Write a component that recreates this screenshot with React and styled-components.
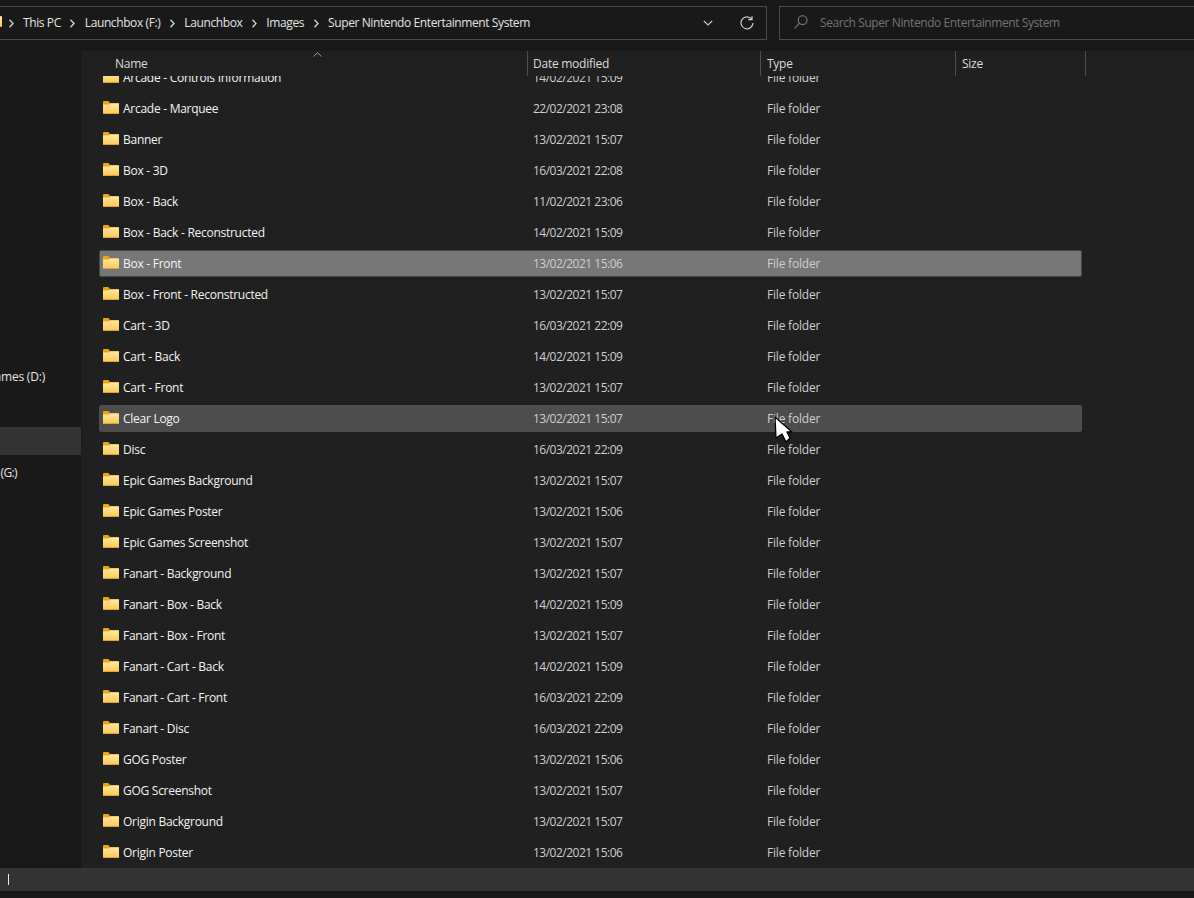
import React from "react";
import styled, { createGlobalStyle } from "styled-components";

const Global = createGlobalStyle`
  html, body { margin: 0; padding: 0; background: #191919; overflow: hidden; }
  #root { width: 1194px; height: 898px; }
`;

const Shell = styled.div`
  position: relative; width: 1194px; height: 898px; display: flex; flex-direction: column;
  background: #191919; color: #fff; overflow: hidden;
  font-family: "Open Sans", "Noto Sans", sans-serif; font-size: 12px;
`;
const TopBar = styled.div`
  height: 51px; flex: none; display: flex; align-items: flex-start; padding-top: 6px; box-sizing: border-box; gap: 12px;
`;
const AddressBox = styled.div`
  width: 767px; height: 34px; box-sizing: border-box; flex: none; display: flex; align-items: center;
  border: 1px solid #4c4c4c; border-left: none; overflow: hidden;
`;
const Crumbs = styled.div`
  flex: 1; display: flex; align-items: center; margin-left: -14px; height: 100%; padding-bottom: 2px; box-sizing: border-box;
`;
const Crumb = styled.span`
  color: #e4e4e4; letter-spacing: -0.4px; white-space: nowrap;
`;
const Sep = styled.svg`
  width: 7px; height: 9px; margin: 2px 8.5px 0 ${p => (p.$first ? 5.5 : 8.5)}px; flex: none;
  fill: none; stroke: #d8d8d8; stroke-width: 1.3;
`;
const AddrTool = styled.svg`
  flex: none; fill: none; stroke: ${p => p.$color || "#d0d0d0"}; 
`;
const SearchBox = styled.div`
  flex: 1; height: 34px; box-sizing: border-box; margin-right: -2px; display: flex; align-items: center; gap: 12px;
  padding: 0 0 2px 14px; border: 1px solid #4c4c4c; color: #737373; letter-spacing: -0.41px; white-space: nowrap;
`;
const Body = styled.div`
  flex: 1; min-height: 0; display: flex;
`;
const Sidebar = styled.div`
  width: 82px; flex: none; padding-top: 310px; box-sizing: border-box; border-right: 1px solid #1d1d1d;
  overflow: hidden;
`;
const NavRow = styled.div`
  height: ${p => (p.$selected ? 28 : 32)}px; margin: ${p => (p.$selected ? "2px 0 2px 0" : 0)};
  display: flex; align-items: center; justify-content: flex-end; overflow: hidden; white-space: nowrap;
  background: ${p => (p.$selected ? "#333333" : "transparent")};
  padding-right: ${p => p.$pad || 0}px; color: #e6e6e6; padding-bottom: 1px; box-sizing: border-box;
  letter-spacing: ${p => p.$spacing || 0}px;
`;
const Main = styled.div`
  flex: 1; min-width: 0; background: #202020; display: flex; flex-direction: column;
`;
const Header = styled.div`
  height: 25px; flex: none; display: flex; position: relative; z-index: 1; background: #202020;
`;
const HeadCell = styled.div`
  position: relative; width: ${p => p.$w}px; padding-left: ${p => p.$pad}px; box-sizing: border-box;
  border-right: 1px solid #4f4f4f; line-height: 26px; color: #dcdcdc; letter-spacing: -0.25px;
`;
const Caret = styled.svg`
  position: absolute; left: 231px; top: 1px; width: 9px; height: 5px;
  fill: none; stroke: #9a9a9a; stroke-width: 1;
`;
const List = styled.div`
  flex: 1; min-height: 0; overflow: hidden;
`;
const Rows = styled.div`
  margin: -12px 0 0 17px; display: flex; flex-direction: column; gap: 4px;
`;
const Row = styled.div`
  width: 983px; height: 27px; box-sizing: border-box; display: grid; grid-template-columns: 433px 234px 1fr;
  align-items: center; border: 1px solid ${p => (p.$state === "selected" ? "#454545" : p.$state === "hover" ? "#4d4d4d" : "transparent")};
  border-radius: 2px;
  background: ${p => (p.$state === "selected" ? "#777777" : p.$state === "hover" ? "#4d4d4d" : "transparent")};
`;
const NameCell = styled.div`
  display: flex; align-items: center; gap: 4px; padding-left: 3px; color: #f4f4f4; white-space: nowrap; letter-spacing: -0.27px;
`;
const DateCell = styled.div`color: #cfcfcf; letter-spacing: -0.5px;`;
const TypeCell = styled.div`color: #cfcfcf; letter-spacing: -0.2px;`;
const Status = styled.div`
  height: 23px; flex: none; background: #333333; display: flex; align-items: center; padding-left: 8px;
`;
const Caret2 = styled.div`width: 1px; height: 11px; background: #e8e8e8;`;
const Foot = styled.div`height: 7px; flex: none; background: #191919;`;
const Pointer = styled.svg`
  position: absolute; left: 770px; top: 414px; width: 24px; height: 30px;
`;

const Folder = () => (
  <svg width="16" height="13" viewBox="0 0 16 13" style={{ flex: "none", marginTop: -3 }}>
    <defs>
      <linearGradient id="ff" x1="0" y1="0" x2="0" y2="1">
        <stop offset="0" stopColor="#ffe9a3" />
        <stop offset="1" stopColor="#fbc94f" />
      </linearGradient>
    </defs>
    <path d="M0 1.2C0 .5.5 0 1.2 0h4l2 2H16v3H0z" fill="#eaa60f" />
    <path d="M0 3.6h6l1.6-1.2H15c.6 0 1 .4 1 1V12c0 .6-.4 1-1 1H1c-.6 0-1-.4-1-1z" fill="url(#ff)" />
    <path d="M0 12h16c0 .6-.4 1-1 1H1c-.6 0-1-.4-1-1z" fill="#e0a52e" />
  </svg>
);

const data = [
  ["Arcade - Controls Information", "14/02/2021 15:09"],
  ["Arcade - Marquee", "22/02/2021 23:08"],
  ["Banner", "13/02/2021 15:07"],
  ["Box - 3D", "16/03/2021 22:08"],
  ["Box - Back", "11/02/2021 23:06"],
  ["Box - Back - Reconstructed", "14/02/2021 15:09"],
  ["Box - Front", "13/02/2021 15:06", "selected"],
  ["Box - Front - Reconstructed", "13/02/2021 15:07"],
  ["Cart - 3D", "16/03/2021 22:09"],
  ["Cart - Back", "14/02/2021 15:09"],
  ["Cart - Front", "13/02/2021 15:07"],
  ["Clear Logo", "13/02/2021 15:07", "hover"],
  ["Disc", "16/03/2021 22:09"],
  ["Epic Games Background", "13/02/2021 15:07"],
  ["Epic Games Poster", "13/02/2021 15:06"],
  ["Epic Games Screenshot", "13/02/2021 15:07"],
  ["Fanart - Background", "13/02/2021 15:07"],
  ["Fanart - Box - Back", "14/02/2021 15:09"],
  ["Fanart - Box - Front", "13/02/2021 15:07"],
  ["Fanart - Cart - Back", "14/02/2021 15:09"],
  ["Fanart - Cart - Front", "16/03/2021 22:09"],
  ["Fanart - Disc", "16/03/2021 22:09"],
  ["GOG Poster", "13/02/2021 15:06"],
  ["GOG Screenshot", "13/02/2021 15:07"],
  ["Origin Background", "13/02/2021 15:07"],
  ["Origin Poster", "13/02/2021 15:06"],
];

const Chevron = ({ first }) => (
  <Sep $first={first} viewBox="0 0 7 9"><path d="M1.5 .8 5 4.5 1.5 8.2" /></Sep>
);

export default function App() {
  return (
    <Shell>
      <Global />
      <TopBar>
        <AddressBox>
          <Crumbs>
            <Folder />
            <Chevron first />
            <Crumb>This PC</Crumb>
            <Chevron />
            <Crumb>Launchbox (F:)</Crumb>
            <Chevron />
            <Crumb>Launchbox</Crumb>
            <Chevron />
            <Crumb>Images</Crumb>
            <Chevron />
            <Crumb>Super Nintendo Entertainment System</Crumb>
          </Crumbs>
          <AddrTool width="10" height="6" viewBox="0 0 10 6" strokeWidth="1.2" style={{ marginRight: 27 }}>
            <path d="M.8.8 5 5 9.2.8" />
          </AddrTool>
          <AddrTool width="14" height="14" viewBox="0 0 14 14" strokeWidth="1.2" style={{ marginRight: 12 }}>
            <path d="M11.8 3.2A6 6 0 1 0 13 7" />
            <path d="M8.2 3.6h3.8V.2" />
          </AddrTool>
        </AddressBox>
        <SearchBox>
          <AddrTool width="14" height="14" viewBox="0 0 14 14" $color="#7a7a7a" strokeWidth="1.1">
            <circle cx="8.6" cy="5.2" r="4.4" />
            <path d="M5.4 8.4.6 13.4" />
          </AddrTool>
          Search Super Nintendo Entertainment System
        </SearchBox>
      </TopBar>
      <Body>
        <Sidebar>
          <NavRow $pad={36} $spacing={-0.2}>Games (D:)</NavRow>
          <NavRow />
          <NavRow $selected />
          <NavRow $pad={64} $spacing={-0.6}>(G:)</NavRow>
        </Sidebar>
        <Main>
          <Header>
            <HeadCell $w={446} $pad={33}>
              Name
              <Caret viewBox="0 0 9 5"><path d="M.5 4.5 4.5.8 8.5 4.5" /></Caret>
            </HeadCell>
            <HeadCell $w={233} $pad={5}>Date modified</HeadCell>
            <HeadCell $w={195} $pad={6}>Type</HeadCell>
            <HeadCell $w={130} $pad={6}>Size</HeadCell>
          </Header>
          <List>
            <Rows>
              {data.map(([name, date, state]) => (
                <Row key={name} $state={state}>
                  <NameCell><Folder />{name}</NameCell>
                  <DateCell>{date}</DateCell>
                  <TypeCell>File folder</TypeCell>
                </Row>
              ))}
            </Rows>
          </List>
        </Main>
      </Body>
      <Status><Caret2 /></Status>
      <Foot />
      <Pointer viewBox="0 0 24 30">
        <path d="M5 3 6 24 12 20 16 28 20 24 17 18 22 18Z" fill="#fff" stroke="#000" strokeWidth="1.3" strokeLinejoin="round" />
      </Pointer>
    </Shell>
  );
}
